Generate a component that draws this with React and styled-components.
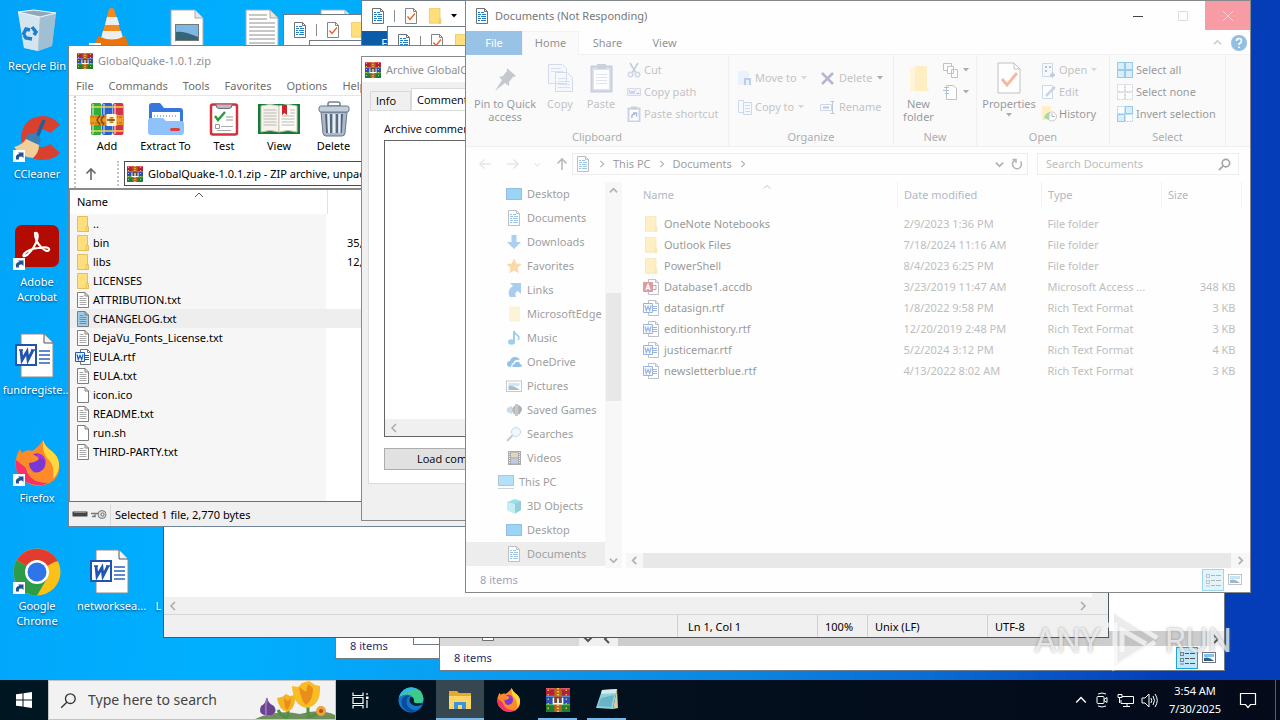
import React from 'react';
import styled, { createGlobalStyle, css } from 'styled-components';

const GlobalStyle = createGlobalStyle`
  * { box-sizing: border-box; }
  html, body, #root { height: 100%; margin: 0; }
  body {
    overflow: hidden;
    font-family: 'Noto Sans', 'Open Sans', sans-serif;
    font-size: 11px;
    line-height: 16px;
    color: #000;
  }
  button, input, textarea { font: inherit; color: inherit; margin: 0; }
  button { border: 0; padding: 0; background: none; }
  a { color: inherit; text-decoration: none; }
  svg { display: block; flex: none; }
`

/* ---------- icons ---------- */

const Svg = ({ w = 16, h, box, children }) => (
  <svg width={w} height={h || w} viewBox={box || `0 0 ${w} ${h || w}`} fill="none" aria-hidden="true">{children}</svg>
)

const DocIcon = () => (
  <Svg>
    <path d="M2.500 .5h8l3 3v12h-11z" fill="#fff" stroke="#6b7177" />
    <path d="M10.500 .5v3h3" stroke="#6b7177" />
    <path d="M4 4.500h2M7 4.500h3M4 6.500h3M8 6.500h4M4 8.500h2M7 8.500h5M4 10.500h3M8 10.500h4M4 12.500h2M7 12.500h5" stroke="#1d7fc4" />
  </Svg>
)

const CheckDoc = ({ w = 16, h = 16, line = 0.9 }) => (
  <Svg w={w} h={h} box="0 0 16 16">
    <path d="M2.500 .5h8l3 3v12h-11z" fill="#fff" stroke="#777" strokeWidth={line} />
    <path d="M10.500 .5v3h3" stroke="#777" strokeWidth={line} />
    <path d="M4.500 8.500l2.500 3 5-6" stroke="#e8622c" strokeWidth="1.400" />
  </Svg>
)

const FolderIcon = ({ w = 16, h = 16 }) => (
  <Svg w={w} h={h} box="0 0 16 16">
    <path d="M2 .5h11V12h1v3.500H2z" fill="#ffdf7c" />
    <path d="M2.500 .5h10.500v14.500H2.500z" stroke="#ecc965" strokeWidth=".8" />
    <path d="M12 11h2v4.500h-2z" fill="#fbd869" stroke="#e3ba55" strokeWidth=".5" />
  </Svg>
)

const NewFolderArt = () => (
  <Svg w={24} h={32}>
    <path d="M3 5h9v24H3z" fill="#ffe9a8" />
    <path d="M8 4h12v22h1.500v3H8z" fill="#ffdc78" />
  </Svg>
)

const TxtIcon = ({ on }) => (
  <Svg w={12} h={16}>
    <path d="M.5 .5h7.500l3.500 3.500v11.500H.5z" fill={on ? '#9fcdec' : '#fff'} stroke="#7d7d7d" />
    <path d="M8 .5V4h3.500" stroke="#7d7d7d" />
    <path d="M2.500 4.500h4M2.500 6.500h7M2.500 8.500h7M2.500 10.500h7M2.500 12.500h7" stroke={on ? '#5d92b8' : '#aaa'} />
  </Svg>
)

const BlankIcon = () => (
  <Svg w={12} h={16}>
    <path d="M.5 .5h7.500l3.500 3.500v11.500H.5z" fill="#fff" stroke="#7d7d7d" />
    <path d="M8 .5V4h3.500" stroke="#7d7d7d" />
  </Svg>
)

const OfficeIcon = ({ color = '#185abd', access }) => (
  <Svg>
    <path d="M5.500 .5h7l3 3v12h-10z" fill="#fff" stroke="#6d7785" />
    <path d="M12.500 .5v3h3" stroke="#6d7785" />
    {access
      ? <path d="M10 6.500h3v4h-3" stroke={color} />
      : <path d="M10 6.500h4M10 8.500h4M10 10.500h4" stroke={color} />}
    <path d="M.5 3.500h9v9h-9z" fill={access ? color : '#eef4ff'} stroke={color} />
    {access
      ? <path d="M3 11l2-5.500L7 11M3.800 9.300h2.400" stroke="#fff" strokeWidth="1.200" />
      : <path d="M2 5.500l1.300 5L5 6.500l1.700 4L8 5.500" stroke={color} strokeWidth="1.200" />}
  </Svg>
)

const WinrarIcon = ({ size = 16 }) => (
  <Svg w={size} box="0 0 16 16">
    <rect y="0" width="16" height="5" fill="#b3203c" />
    <path d="M0 .5h16" stroke="#e0566c" />
    <rect y="5" width="16" height="5.500" fill="#2b4fae" />
    <path d="M0 5.500h16" stroke="#5f86dc" />
    <rect y="10.500" width="16" height="5.500" fill="#1d7d36" />
    <path d="M0 11h16" stroke="#49b45e" />
    <path d="M1.500 1v14M13.500 1v14" stroke="#e7c64a" strokeWidth=".9" strokeDasharray="1 2" />
    <rect x="5.500" width="5" height="16" fill="#b5651d" />
    <path d="M8 0v5M8 11v5" stroke="#f2b84b" strokeWidth="1.500" strokeDasharray="1 1" />
    <path d="M5 11V6.500M11 11V6.500M5 10.500h6M8 7v3" stroke="#fff" strokeWidth="1.100" />
    <path d="M5.500 6h5v4h-5z" fill="#3d3554" fillOpacity=".6" />
    <path d="M8 7v3" stroke="#fff" />
  </Svg>
)

const AddArt = () => (
  <Svg w={34}>
    <rect x="1" y="1" width="10.500" height="32" rx="2" fill="#2fae3b" />
    <rect x="12" y="1" width="10.500" height="32" rx="2" fill="#2c62cf" />
    <rect x="23" y="1" width="10.500" height="32" rx="2" fill="#d33448" />
    <path d="M3 2v30M14 2v30M25 2v30" stroke="#fff" strokeOpacity=".45" strokeWidth="2" />
    <path d="M1 5h10.500M12 5h10.500M23 5h10.500M1 29h10.500M12 29h10.500M23 29h10.500" stroke="#f5d548" strokeWidth="1.600" />
    <rect x="0" y="13" width="34" height="10" rx="1" fill="#ec9a24" />
    <path d="M1 15h32M1 21h32" stroke="#b5620e" strokeDasharray="3 1" />
    <path d="M10 13l-3 5 3 5M14 13l-3 5 3 5" stroke="#8a4a0c" strokeWidth="1.500" />
    <path d="M18 13.500h7v9h-7z" stroke="#fff6df" strokeWidth="3" />
    <path d="M17 18h8" stroke="#5d4a2d" strokeWidth="1.500" />
  </Svg>
)

const ExtractArt = () => (
  <Svg w={36} h={34}>
    <path d="M1 4q0-3 3-3h8l4 5h16q3 0 3 3v21H1z" fill="#3577dc" />
    <path d="M4 10h28v12H4z" fill="#fff" />
    <path d="M6 14h24" stroke="#9fb6d4" strokeWidth="2" strokeDasharray="1 2" />
    <path d="M0 19q0-3 3-3h12l3 3h15q3 0 3 3v8q0 3-3 3H3q-3 0-3-3z" fill="#8fc2fb" />
    <rect x="22" y="26" width="10" height="3" rx="1.500" fill="#e23b3b" />
  </Svg>
)

const TestArt = () => (
  <Svg w={30} h={34}>
    <rect x="2" y="2.500" width="26" height="30" rx="2" fill="#fff" stroke="#d2303c" strokeWidth="2.500" />
    <path d="M7 2.500q0 4 3 4h10q3 0 3-4" fill="#b9bdc2" stroke="#6a6f75" />
    <path d="M6 14l3 4 7-8" stroke="#2c9a3c" strokeWidth="2.400" />
    <path d="M17 15h7M17 18h7" stroke="#999" />
    <path d="M6.500 22.500h4v4h-4z" stroke="#999" />
    <path d="M12 24.500h12M8 28.500h14" stroke="#aaa" />
  </Svg>
)

const ViewArt = () => (
  <Svg w={42} h={34}>
    <path d="M0 2h42v30H0z" fill="#177a37" />
    <path d="M3 4q9-3 18 0v26q-9-3-18 0z" fill="#f7f3ea" stroke="#c9c4b6" />
    <path d="M21 4q9-3 18 0v26q-9-3-18 0z" fill="#fffdf7" stroke="#c9c4b6" />
    <path d="M5.500 8h13M5.500 11h13M5.500 14h13M5.500 17h13M5.500 20h13M5.500 23h13M23.500 14h13M23.500 17h13M23.500 20h13M23.500 23h13M32 8h5M32 11h5" stroke="#b9b9b9" />
    <path d="M24 3h5v10l-2.500-2-2.500 2z" fill="#d2202c" />
  </Svg>
)

const TrashArt = () => (
  <Svg w={32} h={36}>
    <path d="M10 3q0-2 2-2h8q2 0 2 2v2H10z" stroke="#75808d" strokeWidth="1.500" />
    <path d="M3 11h26l-2 21q-.3 3-3 3H8q-2.700 0-3-3z" fill="#a9b9ca" stroke="#66778a" />
    <path d="M8 13l1 19M13 13v19M19 13v19M24 13l-1 19" stroke="#526173" strokeWidth="1.800" />
    <path d="M10.500 13l.5 19M16 13v19M21.500 13v19" stroke="#e6eef6" strokeWidth="2" />
    <rect x="1" y="5" width="30" height="6" rx="2" fill="#c4d0dd" stroke="#66778a" />
  </Svg>
)

const Chevron = ({ d = 'right', size = 10, color = '#555', bold = 1.5 }) => {
  const paths = { right: 'M3 1l4 4-4 4', left: 'M7 1L3 5l4 4', up: 'M1 7l4-4 4 4', down: 'M1 3l4 4 4-4' }
  return <Svg w={size} box="0 0 10 10"><path d={paths[d]} stroke={color} strokeWidth={bold} /></Svg>
}

const Caret = ({ color = '#444' }) => <Svg w={6} h={4}><path d="M0 0h6L3 3.500z" fill={color} /></Svg>

const Arrow = ({ d = 'up', color = '#666' }) => {
  const turn = { up: 0, right: 90, left: 270 }[d]
  return (
    <Svg w={14}>
      <path d="M7 13V2M2.500 6.500L7 2l4.500 4.500" stroke={color} strokeWidth="1.600" transform={`rotate(${turn} 7 7)`} />
    </Svg>
  )
}

const Glass = ({ size = 14, color = '#333', w = 1.3 }) => (
  <Svg w={size} box="0 0 14 14">
    <circle cx="8.500" cy="5.500" r="4" stroke={color} strokeWidth={w} />
    <path d="M5.600 8.500L1 13" stroke={color} strokeWidth={w} />
  </Svg>
)

const navArt = {
  desktop: <><rect x=".5" y="2.500" width="15" height="11" fill="#22a1ef" stroke="#1173b5" /></>,
  download: <path d="M5.500 1h5v7H15l-7 7-7-7h4.500z" fill="#4592dd" />,
  star: <path d="M8 .5l2.300 5 5.200.6-3.900 3.600 1.100 5.500L8 12.400l-4.700 2.800 1.100-5.500L.5 6.100l5.200-.6z" fill="#f7ab3e" />,
  link: <path d="M4 1h11v11l-3-3q-4 1-2 6H4Q0 9 7 4z" fill="#3f8ee0" />,
  paleFolder: <path d="M3 .5h11v15H3z" fill="#fde9a6" />,
  music: <><path d="M8 1v10" stroke="#1e90dc" strokeWidth="2" /><ellipse cx="5.500" cy="12" rx="3.500" ry="2.800" fill="#1e90dc" /><path d="M8 1q1 3 3.500 4.500T12 10" stroke="#1e90dc" strokeWidth="1.600" /></>,
  cloud: <path d="M1 10q0-3 3-3 1-4 5-4 4 0 4.500 3-5-1-6 3-2 0-2.500 4Q1 13 1 10zM6.500 13q-.5-3 2-3 1-3 4-2 1.500.5 1.500 2 2 .5 2 1.700 0 1.300-2 1.300z" fill="#0f78c8" />,
  picture: <><rect x=".5" y="3" width="15" height="10.500" fill="#fff" stroke="#888" /><path d="M2.500 5h11v3h-11z" fill="#8cc8f5" /><path d="M2.500 12V8q5-1 11 4z" fill="#466b80" /></>,
  game: <><circle cx="10.500" cy="8" r="4.500" fill="#5d666e" /><path d="M9 2h3v12H9z" fill="#7d868e" /><path d="M12 3q4 1 4 5l-3 5z" fill="#454c55" /><path d="M1 6l5-2v8l-5-2z" fill="#88add0" /></>,
  search: <><circle cx="10" cy="6" r="4.500" fill="#d8f1ff" stroke="#8fa4b5" /><path d="M6.500 9.500L1 15" stroke="#7e8b95" strokeWidth="2" /></>,
  video: <><rect x="2" y="1" width="13" height="14" fill="#444" /><path d="M5 2.500h7v5H5z" fill="#b9a65c" /><path d="M5 8.500h7v5H5z" fill="#7a86c5" /><path d="M3.500 2v12M13.500 2v12" stroke="#ddd" strokeDasharray="1 1" /></>,
  pc: <><rect x=".5" y="1.500" width="15" height="10" fill="#57bdf5" stroke="#5e7a90" /><path d="M0 14.500h16" stroke="#8da0af" /></>,
  cube: <><path d="M1 4l8-3 6 2v9l-6 3.500L1 12z" fill="#27b6c9" /><path d="M1 4l8 2v9.500L1 12z" fill="#7adbe6" /><path d="M9 6l6-3v9l-6 3.500z" fill="#1192b2" /></>,
}

const NavIcon = ({ name }) => name === 'doc' ? <DocIcon /> : <Svg>{navArt[name]}</Svg>

/* ---------- desktop ---------- */

const Desktop = styled.main`
  position: relative;
  height: 100%;
  overflow: hidden;
  display: flex;
  flex-direction: column;
  justify-content: space-between;
  background: linear-gradient(97deg, #02a4f9 0%, #00b0ff 22%, #0a9cf0 42%, #0a86e2 60%, #0a6cd4 74%, #053cb8 92%);
`

const IconGrid = styled.div`
  display: grid;
  grid-template-columns: 74px repeat(4, 75px);
  grid-template-rows: repeat(6, 108px);
  padding-top: 8px;
`

const Shortcut = styled.button`
  grid-column: ${p => p.$col};
  grid-row: ${p => p.$row};
  display: flex;
  flex-direction: column;
  align-items: center;
  justify-content: flex-start;
  gap: 2px;
  line-height: 15px;
  color: #fff;
  white-space: pre;
  text-shadow: 0 1px 2px rgba(0, 30, 60, .7);
`

const LinkBadge = () => (
  <>
    <rect x="0" y="34" width="12" height="12" fill="#fff" />
    <path d="M3 43.500Q2 38 6.500 38L5 36.500h5.500V42L9 40.500q-4-.5-3 3z" fill="#23528f" />
  </>
)

const BinArt = () => (
  <Svg w={48}>
    <path d="M5 4l16-2 22 3-4 33-14 5-14-3z" fill="#c8dcea" fillOpacity=".85" />
    <path d="M5 4l22 5-2 34-14-3z" fill="#dfe9f0" fillOpacity=".8" />
    <path d="M27 9l16-4-4 33-14 5z" fill="#9fb9ca" fillOpacity=".8" />
    <path d="M5 4l16-2 22 3-16 4z" fill="#8fa9b8" stroke="#f3f8fb" />
    <path d="M10 27l3-6 4 1M19 19l4 5-2 3M19 31l-6-1-2-3" stroke="#1a7ed0" strokeWidth="3.500" />
  </Svg>
)

const VlcArt = () => (
  <Svg w={48}>
    <path d="M21 1q3-2 5 0l9 30H13z" fill="#f28a1d" />
    <path d="M19 9h10l2.500 8H17zM15 23h18l2 7q-11 5-22 0z" fill="#eee" />
    <path d="M10 28l-5 12h37l-5-12q-13 7-27 0z" fill="#e9740c" />
    <rect x="1" y="35" width="12" height="12" fill="#fff" />
  </Svg>
)

const PictureFileArt = () => (
  <Svg w={48}>
    <path d="M8 2h24l8 8v35H8z" fill="#fff" stroke="#aaa" />
    <path d="M32 2v8h8" fill="#e5e5e5" stroke="#aaa" />
    <rect x="12.500" y="16.500" width="23" height="16" fill="#7eb7e6" stroke="#777" />
    <path d="M13 24q8-1 22 5v3H13z" fill="#356577" />
  </Svg>
)

const TextFileArt = () => (
  <Svg w={48}>
    <path d="M8 2h24l8 8v35H8z" fill="#fff" stroke="#aaa" />
    <path d="M32 2v8h8" fill="#e5e5e5" stroke="#aaa" />
    <path d="M11 7h18M11 11h18M11 15h26M11 19h26M11 23h26M11 27h26M11 31h26M11 35h26" stroke="#8f8f8f" />
  </Svg>
)

const WordFileArt = () => (
  <Svg w={48}>
    <path d="M8 2h23l9 9v34H8z" fill="#fff" stroke="#8b8b8b" />
    <path d="M31 2v9h9" fill="#f1f1f1" stroke="#555" />
    <path d="M26 19h11M26 23h11M26 27h11M26 31h11" stroke="#2d63b8" strokeWidth="1.500" />
    <rect x="3" y="13" width="20" height="20" fill="#fff" stroke="#1f54b0" strokeWidth="2" />
    <path d="M8 18l1 10L14 19.500l1 8.500L20 18" stroke="#1f54b0" strokeWidth="2.800" />
    <path d="M6 18h4M18 18h4" stroke="#1f54b0" strokeWidth="1.500" />
  </Svg>
)

const CCleanerArt = () => (
  <Svg w={48}>
    <path d="M47 9Q40 0 29 0 8 2 8 24q2 19 21 20 12 0 18-7L37 28q-7 6-13 1-5-8 0-14 6-4 13 2z" fill="#d8402f" />
    <path d="M31 4l-7 17" stroke="#235f96" strokeWidth="3.500" />
    <path d="M14 19q8-4 14 4l-2 6-13-5z" fill="#3a80b7" />
    <path d="M1 31q8-2 12-8l13 6q0 8-6 13-11 0-19-11z" fill="#f1cf9b" />
    <LinkBadge />
  </Svg>
)

const AcrobatArt = () => (
  <Svg w={48}>
    <rect x="2" y="1" width="44" height="42" rx="7" fill="#b30b00" />
    <path d="M22 9q4-1 2 7-3 9-10 15-5 3-3-1 4-5 14-6 12-2 11 2-2 3-8-3-6-6-6-14z" stroke="#fff" strokeWidth="2.200" />
    <LinkBadge />
  </Svg>
)

const FirefoxShape = () => (
  <>
    <path d="M30 0q2 6 6 9 9 6 10 14 2 14-9 20-13 6-24-1Q0 33 3 19q1-6 4-10l2 4q5-4 10-2 7-4 11-11z" fill="#ff8a2a" />
    <path d="M30 0q2 6 6 9 9 6 10 14 1 9-6 16 2-14-5-20-6-6-5-19z" fill="#ffd83d" />
    <path d="M3 20q-2 14 10 22 12 6 22 1-19 0-22-15z" fill="#f5316c" />
    <circle cx="23" cy="23" r="9.500" fill="#7b36d6" />
    <path d="M9 13q8-2 14 3 4 1 2 4-4 3-9 3 0 6 5 9-8 0-10-8z" fill="#ff8a2a" />
    <path d="M23 13q9 0 10 10-3-5-8-5z" fill="#a934d8" />
  </>
)

const FirefoxArt = () => <Svg w={48}><FirefoxShape /><LinkBadge /></Svg>

const ChromeArt = () => (
  <Svg w={48}>
    <circle cx="24" cy="24" r="23.500" fill="#fbc116" />
    <path d="M24 24L3.700 12.300A23.500 23.500 0 0 1 44.300 12.300z" fill="#e33b2e" />
    <path d="M24 24L3.700 12.300A23.500 23.500 0 0 0 24 47.500l10-17z" fill="#2c9c46" />
    <path d="M24 12.500h20.400" stroke="#e33b2e" strokeWidth="2" />
    <circle cx="24" cy="24" r="12" fill="#fff" />
    <circle cx="24" cy="24" r="9.500" fill="#2f75e8" />
    <LinkBadge />
  </Svg>
)

const shortcuts = [
  { col: 1, row: 1, art: <BinArt />, label: 'Recycle Bin' },
  { col: 1, row: 2, art: <CCleanerArt />, label: 'CCleaner' },
  { col: 1, row: 3, art: <AcrobatArt />, label: 'Adobe\nAcrobat' },
  { col: 1, row: 4, art: <WordFileArt />, label: 'fundregiste...' },
  { col: 1, row: 5, art: <FirefoxArt />, label: 'Firefox' },
  { col: 1, row: 6, art: <ChromeArt />, label: 'Google\nChrome' },
  { col: 2, row: 1, art: <VlcArt /> },
  { col: 3, row: 1, art: <PictureFileArt /> },
  { col: 4, row: 1, art: <TextFileArt /> },
  { col: 5, row: 1, art: <TextFileArt /> },
  { col: 2, row: 6, art: <WordFileArt />, label: 'networksea...' },
]

const CutLabel = styled.span`
  width: 62px;
  text-align: left;
`

/* ---------- windows ---------- */

const Window = styled.section`
  position: absolute;
  left: ${p => p.$x}px;
  top: ${p => p.$y}px;
  width: ${p => p.$w}px;
  height: ${p => p.$h}px;
  display: flex;
  flex-direction: column;
  overflow: hidden;
  background: ${p => p.$bg || '#fff'};
  border: 1px solid ${p => p.$line || '#6f7a83'};
`

const Spacer = styled.div`flex: 1;`

const QuickBar = styled.div`
  display: flex;
  align-items: center;
  gap: 8px;
  height: 30px;
  flex: none;
  padding-left: 8px;
`

const Rule = styled.span`
  width: 1px;
  height: 12px;
  background: #8c8c8c;
`

const FileTab = styled.button`
  width: 56px;
  height: 24px;
  background: ${p => p.$deep ? '#0a5ba8' : '#1979ca'};
  color: #fff;
  text-align: center;
`

const StatusBar = styled.footer`
  display: flex;
  align-items: center;
  flex: none;
  height: 24px;
  padding: 0 4px 0 14px;
  color: #1e2a6b;
`

const ViewButton = styled.button`
  width: 22px;
  height: 22px;
  display: grid;
  place-items: center;
  ${p => p.$on && css`
    background: #bfe9fb;
    border: 1px solid #26a0da;
  `}
`

const DetailsGlyph = () => (
  <Svg w={18}>
    <path d="M2.500 3.500h3v3h-3zM2.500 9.500h3v3h-3z" stroke="#222" strokeDasharray="1 1" />
    <path d="M2.500 15h3" stroke="#222" strokeDasharray="1 1" />
    <path d="M7 4.500h4M12 4.500h5M7 9.500h4M12 9.500h5M7 14.500h4M12 14.500h5" stroke="#555" />
  </Svg>
)

const LargeGlyph = () => (
  <Svg w={14} h={12}>
    <rect x=".5" y=".5" width="13" height="10" fill="#fff" stroke="#777" />
    <path d="M2 2h10v3H2z" fill="#7cc4f2" />
    <path d="M2 9V6q5-2 10 3z" fill="#2f5f80" />
  </Svg>
)

const ExplorerStatus = () => (
  <StatusBar>
    <span>8 items</span>
    <Spacer />
    <ViewButton $on aria-label="Details"><DetailsGlyph /></ViewButton>
    <ViewButton aria-label="Large icons"><LargeGlyph /></ViewButton>
  </StatusBar>
)

const PaneFoot = styled.div`
  display: flex;
  height: 15px;
  flex: none;
  align-items: center;
`

const SelectedEnd = styled.div`
  display: flex;
  align-items: flex-end;
  width: 139px;
  height: 15px;
  background: #d9d9d9;
  padding: 0 0 5px 40px;
  overflow: hidden;
`

const BarEnd = styled.div`
  width: ${p => p.$w || 15}px;
  height: 15px;
  display: grid;
  place-items: center;
  background: #f0f0f0;
`

const BarThumb = styled.div`
  flex: 1;
  height: 15px;
  background: #cdcdcd;
`

const BackExplorer = ({ x, y, foot, tab }) => (
  <Window $x={x} $y={y} $w={786} $h={593}>
    <QuickBar>
      <DocIcon /><Rule /><CheckDoc /><FolderIcon /><Caret color="#000" /><Rule />
    </QuickBar>
    {tab && <FileTab $deep>File</FileTab>}
    <Spacer />
    {foot && (
      <PaneFoot>
        <SelectedEnd><DocIcon /></SelectedEnd>
        <BarEnd $w={17}><Chevron d="down" bold={2} /></BarEnd>
        <BarEnd $w={22}><Chevron d="left" bold={2} /></BarEnd>
        <BarThumb />
        <BarEnd $w={17}><Chevron bold={2} /></BarEnd>
      </PaneFoot>
    )}
    <ExplorerStatus />
  </Window>
)

/* ---------- notepad ---------- */

const Editor = styled.textarea`
  flex: 1;
  resize: none;
  border: 0;
  outline: 0;
  border-right: 16px solid #f0f0f0;
`

const HBar = styled.div`
  display: flex;
  justify-content: space-between;
  align-items: center;
  height: 17px;
  flex: none;
  padding: 0 20px 0 4px;
  background: #f0f0f0;
`

const NoteStatus = styled.footer`
  display: flex;
  justify-content: flex-end;
  height: 23px;
  flex: none;
  background: #f0f0f0;
  border-top: 1px solid #d7d7d7;
`

const NoteCell = styled.span`
  width: ${p => p.$w}px;
  padding-left: ${p => p.$pad || 7}px;
  line-height: 24px;
  border-left: 1px solid #d0d0d0;
`

const Notepad = () => (
  <Window $x={163} $y={110} $w={946} $h={528} $line="#4d5961">
    <Editor aria-label="Text editor" />
    <HBar><Chevron d="left" color="#aaa" /><Chevron color="#aaa" /></HBar>
    <NoteStatus>
      <NoteCell $w={140} $pad={10}>Ln 1, Col 1</NoteCell>
      <NoteCell $w={50}>100%</NoteCell>
      <NoteCell $w={120}>Unix (LF)</NoteCell>
      <NoteCell $w={121}>UTF-8</NoteCell>
    </NoteStatus>
  </Window>
)

/* ---------- winrar ---------- */

const TitleBar = styled.header`
  display: flex;
  align-items: center;
  gap: 5px;
  flex: none;
  height: ${p => p.$h}px;
  padding-left: ${p => p.$pad}px;
  color: #8f8f8f;
  background: #fff;
`

const MenuBar = styled.nav`
  display: flex;
  gap: 15px;
  height: 20px;
  flex: none;
  padding-left: 7px;
  color: #6d6d6d;
  border-bottom: 1px solid #e6e6e6;
`

const ToolRow = styled.div`
  display: flex;
  height: 65px;
  flex: none;
  margin-left: 5px;
  padding: 5px 0 0 1px;
  border-left: 2px dotted #c4c4c4;
`

const Tool = styled.button`
  width: ${p => p.$w}px;
  display: flex;
  flex-direction: column;
  align-items: center;
  justify-content: space-between;
  height: 53px;
  white-space: nowrap;
`

const ToolArt = styled.span`
  height: 36px;
  display: grid;
  place-items: center;
`

const PathRow = styled.div`
  display: flex;
  align-items: flex-start;
  height: 27px;
  flex: none;
  margin-left: 5px;
  border-left: 2px dotted #c4c4c4;
`

const UpButton = styled.button`
  width: 43px;
  height: 25px;
  padding-left: 8px;
  border-right: 2px dotted #c4c4c4;
`

const PathBox = styled.label`
  display: flex;
  align-items: center;
  gap: 5px;
  flex: 1;
  height: 25px;
  margin-left: 5px;
  padding-left: 2px;
  border: 1px solid #4b4b4b;
`

const PathInput = styled.input`
  flex: 1;
  border: 0;
  padding: 0;
  outline: 0;
  background: none;
`

const ListPane = styled.div`
  flex: 1;
  border-top: 2px solid #8a8a8a;
  border-left: 1px solid #8a8a8a;
  border-bottom: 1px solid #6f6f6f;
  background: linear-gradient(to right, #f6f6f6 256px, #fff 256px);
`

const ArchiveTable = styled.table`
  width: 100%;
  table-layout: fixed;
  border-collapse: collapse;
  th {
    height: 24px;
    padding: 0 0 0 7px;
    text-align: left;
    font-weight: 400;
    background: #fff;
  }
  th:first-child { border-right: 1px solid #e2e2e2; }
  td { height: 19px; padding: 0; }
`

const SortHead = styled.span`
  display: grid;
  grid-template-columns: ${p => p.$at}px 1fr;
  align-items: center;
  height: 24px;
  svg { align-self: start; }
`

const ArchiveRow = styled.tr`
  background: ${p => p.$on ? '#eee' : 'none'};
  td:last-child { padding-left: 20px; }
`

const ArchiveName = styled.span`
  display: flex;
  align-items: center;
  padding-left: ${p => p.$wide ? 5 : 7}px;
  gap: ${p => p.$wide ? 2 : 4}px;
`

const RarStatus = styled.footer`
  display: flex;
  align-items: center;
  gap: 3px;
  height: 24px;
  flex: none;
  padding: 2px 0 0 3px;
  background: #f0f0f0;
  span { border-left: 1px solid #d9d9d9; padding: 3px 0 3px 4px; }
`

const FolderSmall = () => <Svg w={12} h={16} box="2 0 12 16"><path d="M2.500 .5h10v11h1v4h-11z" fill="#ffdf7c" stroke="#e3bf5d" /><path d="M11 10.500h2.500v5H11z" fill="#fbd86f" stroke="#d9b04c" strokeWidth=".5" /></Svg>

const archive = [
  ['..', 'folder'], ['bin', 'folder', '35,'], ['libs', 'folder', '12,'], ['LICENSES', 'folder'],
  ['ATTRIBUTION.txt', 'txt'], ['CHANGELOG.txt', 'on'], ['DejaVu_Fonts_License.txt', 'txt'],
  ['EULA.rtf', 'rtf'], ['EULA.txt', 'txt'], ['icon.ico', 'blank'], ['README.txt', 'txt'],
  ['run.sh', 'blank'], ['THIRD-PARTY.txt', 'txt'],
]

const archiveIcon = {
  folder: <FolderSmall />,
  txt: <TxtIcon />,
  on: <TxtIcon on />,
  rtf: <OfficeIcon />,
  blank: <BlankIcon />,
}

const WinRar = () => (
  <Window $x={68} $y={45} $w={640} $h={482} $line="#6e8595">
    <TitleBar $h={30} $pad={8}><WinrarIcon />GlobalQuake-1.0.1.zip</TitleBar>
    <MenuBar>
      {['File', 'Commands', 'Tools', 'Favorites', 'Options', 'Help'].map(m => <button key={m}>{m}</button>)}
    </MenuBar>
    <ToolRow>
      <Tool $w={60}><ToolArt><AddArt /></ToolArt>Add</Tool>
      <Tool $w={57}><ToolArt><ExtractArt /></ToolArt>Extract To</Tool>
      <Tool $w={60}><ToolArt><TestArt /></ToolArt>Test</Tool>
      <Tool $w={50}><ToolArt><ViewArt /></ToolArt>View</Tool>
      <Tool $w={59}><ToolArt><TrashArt /></ToolArt>Delete</Tool>
    </ToolRow>
    <PathRow>
      <UpButton aria-label="Up"><Arrow /></UpButton>
      <PathBox>
        <WinrarIcon />
        <PathInput aria-label="Path" defaultValue="GlobalQuake-1.0.1.zip - ZIP archive, unpacked size" />
      </PathBox>
    </PathRow>
    <ListPane>
      <ArchiveTable>
        <colgroup><col style={{ width: 257 }} /><col /></colgroup>
        <thead>
          <tr><th><SortHead $at={117}>Name<Chevron d="up" color="#555" bold={1} /></SortHead></th><th /></tr>
        </thead>
        <tbody>
          {archive.map(([name, kind, size]) => (
            <ArchiveRow key={name} $on={kind === 'on'}>
              <td><ArchiveName $wide={kind === 'rtf'}>{archiveIcon[kind]}{name}</ArchiveName></td>
              <td>{size}</td>
            </ArchiveRow>
          ))}
        </tbody>
      </ArchiveTable>
    </ListPane>
    <RarStatus>
      <Svg w={16} h={12}><rect x=".5" y="2.500" width="15" height="5" rx="1" fill="#444" stroke="#999" /><path d="M2 3.500h12" stroke="#888" /></Svg>
      <Svg w={16} h={12}><circle cx="11" cy="5.500" r="4" fill="#ddd" stroke="#777" /><circle cx="11.500" cy="5.500" r="1.500" fill="#fff" stroke="#666" /><path d="M0 4.500h7M1 7.500h3v-2" stroke="#777" strokeWidth="1.500" /></Svg>
      <span>Selected 1 file, 2,770 bytes</span>
    </RarStatus>
  </Window>
)

/* ---------- archive comment dialog ---------- */

const DialogBody = styled.div`
  flex: 1;
  display: flex;
  flex-direction: column;
  font-family: 'Open Sans', 'Noto Sans', sans-serif;
`

const Tabs = styled.div`
  display: flex;
  align-items: flex-end;
  height: 28px;
  flex: none;
  padding-left: 8px;
`

const Tab = styled.button`
  height: ${p => p.$on ? 22 : 19}px;
  padding: 0 5px;
  background: ${p => p.$on ? '#fff' : '#f0f0f0'};
  border: 1px solid #d9d9d9;
  border-bottom: 0;
  width: ${p => p.$on ? 64 : 41}px;
  text-align: left;
`

const TabPanel = styled.div`
  display: flex;
  flex-direction: column;
  align-items: flex-start;
  height: 374px;
  margin: 0 6px;
  padding: 10px 15px 13px;
  background: #fff;
  border: 1px solid #dcdcdc;
`

const CommentBox = styled.div`
  display: flex;
  flex-direction: column;
  width: 100%;
  flex: 1;
  margin: 3px 0 11px;
  border: 1px solid #646464;
`

const CommentArea = styled.textarea`
  flex: 1;
  width: 100%;
  resize: none;
  border: 0;
  outline: 0;
`

const PushButton = styled.button`
  height: 22px;
  padding: 0 32px;
  background: #e1e1e1;
  border: 1px solid #adadad;
`

const CommentDialog = () => (
  <Window $x={361} $y={56} $w={440} $h={465} $bg="#f0f0f0" $line="#8a8a8a">
    <TitleBar $h={25} $pad={3}><WinrarIcon />Archive GlobalQuake-1.0.1.zip</TitleBar>
    <DialogBody>
      <Tabs><Tab>Info</Tab><Tab $on>Comment</Tab></Tabs>
      <TabPanel>
        <label htmlFor="comment">Archive comment</label>
        <CommentBox>
          <CommentArea id="comment" />
          <HBar><Chevron d="left" color="#aaa" /></HBar>
        </CommentBox>
        <PushButton>Load comment</PushButton>
      </TabPanel>
    </DialogBody>
  </Window>
)

/* ---------- front explorer ---------- */

const CaptionBar = styled.header`
  display: flex;
  align-items: center;
  height: 29px;
  flex: none;
  padding-left: 8px;
  gap: 5px;
  color: #777;
`

const CaptionButton = styled.button`
  width: 45px;
  height: 29px;
  display: grid;
  place-items: center;
  background: ${p => p.$close ? '#f79ca5' : 'none'};
`

const CaptionButtons = styled.div`display: flex;`

const Ghost = styled.div`
  flex: 1;
  display: flex;
  flex-direction: column;
  min-height: 0;
  padding-top: 1px;
  opacity: .44;
`

const RibbonTabs = styled.div`
  display: flex;
  align-items: center;
  height: 24px;
  flex: none;
  padding-right: 3px;
  border-bottom: 1px solid #e4e5e6;
`

const RibbonTab = styled.button`
  width: 57px;
  height: 24px;
  text-align: center;
  ${p => p.$on && css`
    background: #f5f6f7;
    border: 1px solid #e4e5e6;
    border-bottom: 0;
  `}
`

const Ribbon = styled.div`
  display: flex;
  height: 92px;
  flex: none;
  background: #f5f6f7;
  border-bottom: 1px solid #dedfe0;
`

const Group = styled.section`
  display: flex;
  flex-direction: column;
  justify-content: space-between;
  align-items: center;
  width: ${p => p.$w}px;
  padding-top: 4px;
  border-right: 1px solid #dfe0e1;
`

const GroupTitle = styled.span`
  color: #444;
  line-height: 18px;
`

const GroupBody = styled.div`
  display: flex;
  width: 100%;
  padding-left: ${p => p.$pad || 0}px;
`

const Big = styled.button`
  width: ${p => p.$w}px;
  display: flex;
  flex-direction: column;
  align-items: center;
  gap: 3px;
  padding-top: 3px;
  line-height: 13px;
  white-space: pre;
  color: ${p => p.$off ? '#777' : '#111'};
`

const Stack = styled.div`
  display: flex;
  flex-direction: column;
  width: ${p => p.$w ? `${p.$w}px` : 'auto'};
  padding-top: ${p => p.$top || 0}px;
  padding-left: ${p => p.$pad || 0}px;
`

const Small = styled.button`
  display: flex;
  align-items: center;
  gap: ${p => p.$gap || 2}px;
  height: ${p => p.$h || 22}px;
  white-space: nowrap;
  color: ${p => p.$off ? '#777' : '#111'};
  svg:nth-child(2) { margin-left: 2px; }
`

const AddressRow = styled.div`
  display: flex;
  align-items: center;
  height: 35px;
  flex: none;
  padding: 0 11px 1px 12px;
`

const HistoryButtons = styled.div`
  display: flex;
  align-items: center;
  width: 94px;
  gap: 14px;
`

const Crumbs = styled.nav`
  display: flex;
  align-items: center;
  gap: 7px;
  flex: 1;
  height: 22px;
  padding: 0 4px 0 2px;
  border: 1px solid #d9d9d9;
  color: #222;
`

const SearchBox = styled.label`
  display: flex;
  align-items: center;
  width: 202px;
  height: 22px;
  margin-left: 9px;
  padding: 0 7px 0 8px;
  border: 1px solid #d9d9d9;
`

const SearchInput = styled.input`
  flex: 1;
  min-width: 0;
  padding: 0;
  border: 0;
  outline: 0;
  background: none;
  &::placeholder { color: #6d6d6d; opacity: 1; }
`

const Panes = styled.div`
  display: flex;
  flex: 1;
  min-height: 0;
`

const NavPane = styled.nav`
  width: 139px;
  flex: none;
  overflow: hidden;
`

const NavLink = styled.a`
  display: flex;
  align-items: center;
  gap: 5px;
  height: 24px;
  padding-left: ${p => p.$root ? 32 : 40}px;
  white-space: nowrap;
  color: #222;
  background: ${p => p.$on ? '#d9d9d9' : 'none'};
`

const VBar = styled.div`
  display: flex;
  flex-direction: column;
  align-items: center;
  justify-content: space-between;
  width: 17px;
  flex: none;
  padding: 4px 0 3px;
  background: #f0f0f0;
`

const VThumb = styled.div`
  width: 15px;
  height: 108px;
  margin-bottom: 58px;
  background: #cdcdcd;
`

const FilePane = styled.div`
  display: flex;
  flex-direction: column;
  flex: 1;
  min-width: 0;
  padding-left: 4px;
`

const FileTable = styled.table`
  width: calc(100% - 9px);
  margin-left: 1px;
  table-layout: fixed;
  border-collapse: collapse;
  th {
    height: 26px;
    padding: 0 6px;
    font-weight: 400;
    text-align: left;
    color: #4c607a;
    border-right: 1px solid #e5e5e5;
  }
  th:first-child { padding-left: 16px; }
  td {
    height: 21px;
    padding: 0 6px;
    color: #6d6d6d;
    white-space: nowrap;
  }
  td:first-child { padding-left: 16px; color: #111; }
  td:last-child { text-align: right; }
  tbody::before { content: ''; display: block; height: 5px; }
`

const FileName = styled.span`
  display: flex;
  align-items: center;
  gap: 5px;
`

const FileBar = styled.div`
  display: flex;
  height: 15px;
`

const nav = [
  ['Desktop', 'desktop'], ['Documents', 'doc'], ['Downloads', 'download'], ['Favorites', 'star'],
  ['Links', 'link'], ['MicrosoftEdge', 'paleFolder'], ['Music', 'music'], ['OneDrive', 'cloud'],
  ['Pictures', 'picture'], ['Saved Games', 'game'], ['Searches', 'search'], ['Videos', 'video'],
  ['This PC', 'pc'], ['3D Objects', 'cube'], ['Desktop', 'desktop'], ['Documents', 'doc'],
]

const files = [
  ['OneNote Notebooks', '2/9/2023 1:36 PM', 'File folder', ''],
  ['Outlook Files', '7/18/2024 11:16 AM', 'File folder', ''],
  ['PowerShell', '8/4/2023 6:25 PM', 'File folder', ''],
  ['Database1.accdb', '3/23/2019 11:47 AM', 'Microsoft Access ...', '348 KB'],
  ['datasign.rtf', '1/8/2022 9:58 PM', 'Rich Text Format', '3 KB'],
  ['editionhistory.rtf', '12/20/2019 2:48 PM', 'Rich Text Format', '3 KB'],
  ['justicemar.rtf', '5/2/2024 3:12 PM', 'Rich Text Format', '4 KB'],
  ['newsletterblue.rtf', '4/13/2022 8:02 AM', 'Rich Text Format', '3 KB'],
]

const fileIcon = name => {
  if (name.endsWith('.rtf')) return <OfficeIcon />
  if (name.endsWith('.accdb')) return <OfficeIcon color="#b7202e" access />
  return <FolderIcon />
}

const PinArt = () => <Svg w={32}><path d="M18 6l9 8-3 1-4 5v4l-4-3-10 8 7-11-3-3 4-1 4-5z" fill="#7d8690" /></Svg>
const CopyArt = () => (
  <Svg w={32}>
    <path d="M4.500 2.500h14l4 4v15h-18zM11.500 10.500h12l5 5v14h-17z" fill="#eef2fb" stroke="#a3b0da" />
    <path d="M7 6.500h10M7 9.500h12M14 16.500h9M14 19.500h12M14 22.500h12M14 25.500h12" stroke="#a9bce6" />
  </Svg>
)
const PasteArt = () => (
  <Svg w={32}>
    <rect x="6.500" y="4.500" width="20" height="25" fill="#b9c3dd" stroke="#8591b8" strokeWidth="2" />
    <path d="M9 8h15v19H9z" fill="#fff" />
    <path d="M12 2h9v5h-9z" fill="#8b98b5" />
    <path d="M11 12.500h11M11 15.500h11M11 18.500h11M11 21.500h11" stroke="#b4c2e4" />
  </Svg>
)
const CutArt = () => <Svg><path d="M4 1l6 10M12 1L6 11" stroke="#8191a8" strokeWidth="1.500" /><circle cx="4.500" cy="12.500" r="2.300" stroke="#8fa6cc" strokeWidth="1.400" /><circle cx="11.500" cy="12.500" r="2.300" stroke="#8fa6cc" strokeWidth="1.400" /></Svg>
const PathArt = () => <Svg><path d="M1.500 4.500h13v7h-13z" fill="#dfe8f6" stroke="#9fb2d1" /><path d="M3 6l1.500 4L6 7l1.500 3L9 6M10.500 9.500h3" stroke="#5a7fb5" /></Svg>
const ShortcutArt = () => <Svg><path d="M2.500 2.500h11v13h-11z" fill="#fff" stroke="#8b9ccf" strokeWidth="2" /><path d="M5 .5h6v3H5z" fill="#8b98b5" /><path d="M6 12q-1-4 3-4M7 7h3.500v3.500" stroke="#3566b0" strokeWidth="1.500" /></Svg>
const MoveArt = () => <Svg><path d="M1 1h9l2 2v12H1z" fill="#d5e2f5" /><path d="M8 15V9h5v6" stroke="#6f8fc2" strokeWidth="2" /></Svg>
const CopyToArt = () => <Svg><path d="M1.500 1.500h5v12h-5zM6.500 3.500h8v12h-8z" fill="#edf3fc" stroke="#93a9d6" /><path d="M8 6.500h5M8 9.500h5M8 12.500h5" stroke="#93a9d6" /></Svg>
const DeleteArt = () => <Svg><path d="M2 3l11 11M13 3L2 14" stroke="#5d5f95" strokeWidth="2.500" /></Svg>
const RenameArt = () => <Svg><path d="M.5 5.500h11v6H.5z" stroke="#93a9d6" /><path d="M3 8.500h6" stroke="#7088c0" strokeWidth="2" /><path d="M10.500 2.500h4M12.500 2.500v12M10.500 14.500h4" stroke="#6f82b0" /></Svg>
const NewItemArt = () => <Svg><path d="M.5 1.500h8v7h-8z" stroke="#777" /><path d="M4.500 4.500h6v7h-6zM8.500 7.500h6v8h-6z" fill="#fff" stroke="#777" /></Svg>
const EasyArt = () => <Svg><path d="M3.500 1.500h7l3 3v11h-10z" fill="#fff" stroke="#777" /><path d="M1 3.500h5M0 6.500h6M2 9.500h4" stroke="#2a7ad0" /></Svg>
const OpenArt = () => <Svg><path d="M1.500 1.500h10v13h-10z" fill="#eef3fb" stroke="#93a9d6" /><path d="M4 4h2v2H4zM4 8h2v2H4zM8 4h2v2H8z" fill="#5274b4" /><path d="M9 13h5M11.500 10.500v5" stroke="#7087b5" strokeWidth="2" /></Svg>
const EditArt = () => <Svg><path d="M1.500 1.500h10v13h-10z" fill="#fff" stroke="#93a9d6" /><path d="M5 12l9-9" stroke="#8b9cc5" strokeWidth="2.500" /></Svg>
const HistoryArt = () => <Svg><path d="M1 0h9v14H1z" fill="#ffe07a" /><circle cx="11" cy="10.500" r="4.500" fill="#fff" stroke="#888" /><path d="M11 7.500v3h3" stroke="#555" /><path d="M3 12q1-5 6-6L8 14z" fill="#3caa45" /></Svg>
const SelectArt = ({ kind }) => {
  const on = { all: [1, 1, 1, 1], none: [0, 0, 0, 0], invert: [0, 1, 1, 0] }[kind]
  const line = { all: '#1d87d0', none: '#9a9aa8', invert: '#4b9fdc' }[kind]
  return (
    <Svg>
      {on.map((v, i) => (
        <rect key={i} x={i % 2 ? 8.5 : .5} y={i > 1 ? 8.5 : .5} width="7" height="7"
          fill={v ? '#a7dcfa' : '#fff'} stroke={v ? '#1d87d0' : line} strokeDasharray={v ? '0' : '2 1'} />
      ))}
    </Svg>
  )
}

const FrontExplorer = () => (
  <Window $x={465} $y={0} $w={786} $h={593} $line="#85888b" $bg="#fefefe">
    <CaptionBar>
      <DocIcon />
      <span>Documents (Not Responding)</span>
      <Spacer />
      <CaptionButtons>
        <CaptionButton aria-label="Minimize"><Svg w={10}><path d="M0 5.500h10" stroke="#444" /></Svg></CaptionButton>
        <CaptionButton aria-label="Maximize"><Svg w={10}><path d="M.5 .5h9v9h-9z" stroke="#dcdcdc" /></Svg></CaptionButton>
        <CaptionButton $close aria-label="Close"><Svg w={10}><path d="M0 0l10 10M10 0L0 10" stroke="#fbd3d7" /></Svg></CaptionButton>
      </CaptionButtons>
    </CaptionBar>
    <Ghost>
      <RibbonTabs>
        <FileTab>File</FileTab>
        <RibbonTab $on>Home</RibbonTab>
        <RibbonTab>Share</RibbonTab>
        <RibbonTab>View</RibbonTab>
        <Spacer />
        <Small aria-label="Collapse ribbon"><Chevron d="up" size={9} color="#888" /></Small>
        <Stack $pad={9}>
          <Small aria-label="Help">
            <Svg w={16}><circle cx="8" cy="8" r="8" fill="#0a6fbd" /><path d="M5.500 6q0-2.500 2.500-2.500T10.500 6q0 1.500-2.500 3v1M8 11.500V13" stroke="#fff" strokeWidth="1.600" /></Svg>
          </Small>
        </Stack>
      </RibbonTabs>
      <Ribbon>
        <Group $w={263}>
          <GroupBody>
            <Big $w={78}><PinArt />{'Pin to Quick\naccess'}</Big>
            <Big $w={32} $off><CopyArt />Copy</Big>
            <Big $w={50} $off><PasteArt />Paste</Big>
            <Stack>
              <Small $off><CutArt />Cut</Small>
              <Small $off><PathArt />Copy path</Small>
              <Small $off><ShortcutArt />Paste shortcut</Small>
            </Stack>
          </GroupBody>
          <GroupTitle>Clipboard</GroupTitle>
        </Group>
        <Group $w={165}>
          <GroupBody $pad={8}>
            <Stack $w={83} $top={4}>
              <Small $h={29} $off><MoveArt />Move to<Caret color="#aaa" /></Small>
              <Small $h={29} $off><CopyToArt />Copy to<Caret color="#aaa" /></Small>
            </Stack>
            <Stack $top={4}>
              <Small $h={29} $off $gap={3}><DeleteArt />Delete<Caret /></Small>
              <Small $h={29} $off $gap={3}><RenameArt />Rename</Small>
            </Stack>
          </GroupBody>
          <GroupTitle>Organize</GroupTitle>
        </Group>
        <Group $w={83}>
          <GroupBody>
            <Big $w={49}><NewFolderArt />{'New\nfolder'}</Big>
            <Stack>
              <Small aria-label="New item"><NewItemArt /><Caret /></Small>
              <Small aria-label="Easy access"><EasyArt /><Caret /></Small>
            </Stack>
          </GroupBody>
          <GroupTitle>New</GroupTitle>
        </Group>
        <Group $w={133}>
          <GroupBody>
            <Big $w={64}><CheckDoc w={32} h={32} line={0.5} />Properties<Caret /></Big>
            <Stack>
              <Small $off><OpenArt />Open<Caret color="#aaa" /></Small>
              <Small $off><EditArt />Edit</Small>
              <Small><HistoryArt />History</Small>
            </Stack>
          </GroupBody>
          <GroupTitle>Open</GroupTitle>
        </Group>
        <Group $w={116}>
          <GroupBody $pad={7}>
            <Stack>
              <Small $gap={3}><SelectArt kind="all" />Select all</Small>
              <Small $gap={3}><SelectArt kind="none" />Select none</Small>
              <Small $gap={3}><SelectArt kind="invert" />Invert selection</Small>
            </Stack>
          </GroupBody>
          <GroupTitle>Select</GroupTitle>
        </Group>
      </Ribbon>
      <AddressRow>
        <HistoryButtons>
          <Arrow d="left" color="#ccc" />
          <Arrow d="right" color="#ccc" />
          <Chevron d="down" size={7} color="#ccc" />
          <Arrow />
        </HistoryButtons>
        <Crumbs>
          <DocIcon /><Chevron size={8} />
          <a href="#pc">This PC</a><Chevron size={8} />
          <a href="#docs">Documents</a><Chevron size={8} />
          <Spacer />
          <Chevron d="down" size={9} bold={2} />
          <Svg w={12}><path d="M9.500 3.500A4.500 4.500 0 1 1 4 2.200M1.500 1.500H5V5" stroke="#555" strokeWidth="1.500" /></Svg>
        </Crumbs>
        <SearchBox>
          <SearchInput placeholder="Search Documents" aria-label="Search Documents" />
          <Glass size={13} w={1.8} />
        </SearchBox>
      </AddressRow>
      <Panes>
        <NavPane>
          {nav.map(([label, icon], i) => (
            <NavLink key={i} href="#nav" $root={icon === 'pc'} $on={i === nav.length - 1}>
              <NavIcon name={icon} />{label}
            </NavLink>
          ))}
        </NavPane>
        <VBar><Chevron d="up" size={9} bold={2} /><VThumb /><Chevron d="down" size={9} bold={2} /></VBar>
        <FilePane>
          <FileTable>
            <colgroup>
              <col /><col style={{ width: 144 }} /><col style={{ width: 120 }} /><col style={{ width: 80 }} />
            </colgroup>
            <thead>
              <tr><th><SortHead $at={120}>Name<Chevron d="up" size={8} bold={1} /></SortHead></th><th>Date modified</th><th>Type</th><th>Size</th></tr>
            </thead>
            <tbody>
              {files.map(([name, date, type, size]) => (
                <tr key={name}>
                  <td><FileName>{fileIcon(name)}{name}</FileName></td>
                  <td>{date}</td><td>{type}</td><td>{size}</td>
                </tr>
              ))}
            </tbody>
          </FileTable>
          <Spacer />
          <FileBar>
            <BarEnd $w={17}><Chevron d="left" size={9} bold={2} /></BarEnd>
            <BarThumb />
            <BarEnd $w={19}><Chevron size={9} bold={2} /></BarEnd>
          </FileBar>
        </FilePane>
      </Panes>
      <ExplorerStatus />
    </Ghost>
  </Window>
)

/* ---------- watermark ---------- */

const Watermark = styled.div`
  position: absolute;
  right: 48px;
  bottom: 48px;
  display: flex;
  align-items: center;
  gap: 4px;
  font: 34px/64px 'Roboto', sans-serif;
  color: rgba(255, 255, 255, .7);
  text-shadow: 0 0 3px rgba(110, 110, 110, .6);
`

/* ---------- taskbar ---------- */

const Taskbar = styled.footer`
  position: relative;
  display: flex;
  align-items: stretch;
  height: 40px;
  flex: none;
  color: #fff;
  background: linear-gradient(to right, #001722, #03101d 50%, #040a1a);
`

const TaskButton = styled.button`
  width: ${p => p.$w || 49}px;
  display: grid;
  place-items: center;
  background: ${p => p.$active ? '#36474f' : 'none'};
  ${p => p.$open && css`
    border-bottom: 2px solid #76b9ed;
    padding-top: 2px;
    width: 39px;
    margin: 0 5px;
  `}
  ${p => p.$active && css`
    width: 48px;
    margin: 0;
  `}
`

const TaskSearch = styled.label`
  display: flex;
  align-items: center;
  gap: 11px;
  width: 288px;
  padding-left: 11px;
  background: #f2f2f2;
  border: 1px solid #c4c4c4;
  color: #333;
  font-size: 14px;
`

const TaskInput = styled.input`
  flex: 1;
  min-width: 0;
  border: 0;
  padding: 0;
  outline: 0;
  background: none;
  &::placeholder { color: #444; opacity: 1; }
`

const Tray = styled.div`
  display: flex;
  align-items: center;
  gap: 7px;
  margin-left: auto;
`

const Clock = styled.time`
  width: 60px;
  line-height: 18px;
  text-align: center;
`

const PeekEdge = styled.span`
  width: 5px;
  height: 40px;
  margin-left: 4px;
  border-left: 1px solid #5a616c;
`

const FlowersArt = () => (
  <Svg w={80} h={38}>
    <path d="M0 38q22-10 45-5 20-6 35 1v4z" fill="#6c8f5b" />
    <path d="M12 17q-1 5-6 8-3 7 3 9h8q6-3 2-9-6-3-7-8z" fill="#69438f" />
    <path d="M12 17q-2 8-1 17" stroke="#9770b9" strokeWidth="2" />
    <path d="M33 36V26M53 37V24M33 37q-7-2-10-8M54 36q10-2 12-10" stroke="#4f9140" strokeWidth="3" />
    <path d="M22 17l5-1 4-3 4 2 5-1q1 14-8 17-8-2-10-14z" fill="#f4b424" />
    <path d="M37 5l6 1 4-4 7-2 6 4 5 1q1 20-14 22-13-3-14-22z" fill="#f8bd25" />
    <path d="M44 6q2 14 7 18 7-4 7-17l-5-4-2 8zM29 17q0 9 3 12 4-4 4-12l-3 3z" fill="#ea8e1a" />
    <circle cx="66" cy="30" r="5" fill="#f2a03a" /><circle cx="66" cy="30" r="2" fill="#a8541a" />
  </Svg>
)

const EdgeArt = () => (
  <Svg w={26} box="0 0 26 26">
    <circle cx="13" cy="13" r="12.500" fill="#1277cf" />
    <path d="M1 10Q5 0 14 .5q10 .5 11.500 11 0 5-6 6-5 0-4-3 1-6-6-7-5 0-8.500 2.500z" fill="#3ccb8b" />
    <path d="M1 10Q5 0 14 .5q3 0 6 2Q9 3 1 10z" fill="#35b6e8" />
    <path d="M9 12q-2 8 6 11 4 1 8-2-7 6-14 3Q2 20 4 12q3-5 8-3-2 1-3 3z" fill="#0b4a9c" />
    <path d="M12 10q-2 8 6 9 4 0 7-2-2-1-4-1-6 1-5-3 0-3-4-3z" fill="#06202f" />
  </Svg>
)

const ExplorerArt = () => (
  <Svg w={24} h={22}>
    <path d="M1 2h8l2 2h12v16H1z" fill="#e9a82d" />
    <path d="M1 7h22v13H1z" fill="#fcd667" />
    <path d="M6 20v-7h12v7h-4v-4h-4v4z" fill="#3f93d6" />
  </Svg>
)

const NotepadArt = () => (
  <Svg w={26}>
    <path d="M8 3l15-1-4 20-17-1z" fill="#8ed1dd" />
    <path d="M8 3l15-1-1 4-15 1z" fill="#d7e9ec" />
    <path d="M19 22l4-20 1 19z" fill="#d9c9a4" />
    <path d="M7 11l13-3-3 12-13-1z" fill="#4f9fb4" fillOpacity=".6" />
  </Svg>
)

export default function App() {
  return (
    <Desktop>
      <GlobalStyle />
      <IconGrid>
        {shortcuts.map(s => (
          <Shortcut key={`${s.col}-${s.row}`} $col={s.col} $row={s.row} aria-label={s.label || 'Desktop file'}>
            {s.art}{s.label}
          </Shortcut>
        ))}
        <Shortcut $col={3} $row={6}>
          <Svg w={48} />
          <CutLabel>L</CutLabel>
        </Shortcut>
      </IconGrid>

      <BackExplorer x={283} y={14} />
      <BackExplorer x={309} y={40} />
      <BackExplorer x={335} y={66} />
      <BackExplorer x={361} y={0} tab />
      <BackExplorer x={387} y={26} />
      <BackExplorer x={413} y={52} />
      <BackExplorer x={439} y={78} foot />
      <Notepad />
      <WinRar />
      <CommentDialog />
      <FrontExplorer />

      <Taskbar>
        <TaskButton $w={48} aria-label="Start">
          <Svg w={16}><path d="M0 2.300l6.500-.9v6.100H0zM7.500 1.200L16 0v7.500H7.500zM0 8.500h6.500v6.100L0 13.700zM7.500 8.500H16V16l-8.500-1.200z" fill="#fff" /></Svg>
        </TaskButton>
        <TaskSearch>
          <Glass size={17} w={1.1} />
          <TaskInput placeholder="Type here to search" aria-label="Type here to search" />
          <FlowersArt />
        </TaskSearch>
        <TaskButton aria-label="Task view">
          <Svg w={17}><path d="M1 .5v3h10v-3M1 5.500h10v6H1zM1 16.500v-3h10v3M15 1v2M15 8v8" stroke="#fff" strokeWidth="1.200" /><path d="M14 4.500h2.500v2.500H14z" fill="#fff" /></Svg>
        </TaskButton>
        <TaskButton $w={51} aria-label="Edge"><EdgeArt /></TaskButton>
        <TaskButton $active $open aria-label="File Explorer"><ExplorerArt /></TaskButton>
        <TaskButton aria-label="Firefox"><Svg w={25} box="0 0 48 48"><FirefoxShape /></Svg></TaskButton>
        <TaskButton $open aria-label="WinRAR"><WinrarIcon size={24} /></TaskButton>
        <TaskButton $open aria-label="Notepad"><NotepadArt /></TaskButton>
        <Tray>
          <Chevron d="up" size={12} color="#fff" bold={1.2} />
          <Svg w={16}><rect x="3" y="4.500" width="7" height="7" rx="1" stroke="#fff" /><path d="M10 7.500l3-2v5l-3-2M4 2q4-2 8 0M4 14q4 2 8 0" stroke="#fff" /></Svg>
          <Svg w={17}><path d="M5 4.500h11.500v7H4M4 11.500V8M10 11.500v3M6 14.500h7M1 2.500h4v3H1zM2.500 6v5" stroke="#fff" /></Svg>
          <Svg w={17}><path d="M1 6h3l4-4v13l-4-4H1z" stroke="#fff" /><path d="M10 6q1.500 2.500 0 5M12 4q3 4.500 0 9M14 2q4.500 6.500 0 13" stroke="#fff" /></Svg>
          <Clock>3:54 AM<br />7/30/2025</Clock>
          <Svg w={32} h={17}><path d="M8.500 1.500h15v11h-5l-2.500 3-2.500-3h-5z" stroke="#fff" strokeWidth="1.200" /></Svg>
          <PeekEdge />
        </Tray>
      </Taskbar>

      <Watermark>
        <span>ANY</span>
        <Svg w={56} h={64}>
          <path d="M9 5l44 27L9 59z" fill="#999" fillOpacity=".2" />
          <path d="M2 17h8v42l40-25" stroke="#fff" strokeOpacity=".65" strokeWidth="5" />
          <path d="M17 44V22l24 14M12 5l40 25" stroke="#fff" strokeOpacity=".65" strokeWidth="5" />
        </Svg>
        <span>RUN</span>
      </Watermark>
    </Desktop>
  )
}
